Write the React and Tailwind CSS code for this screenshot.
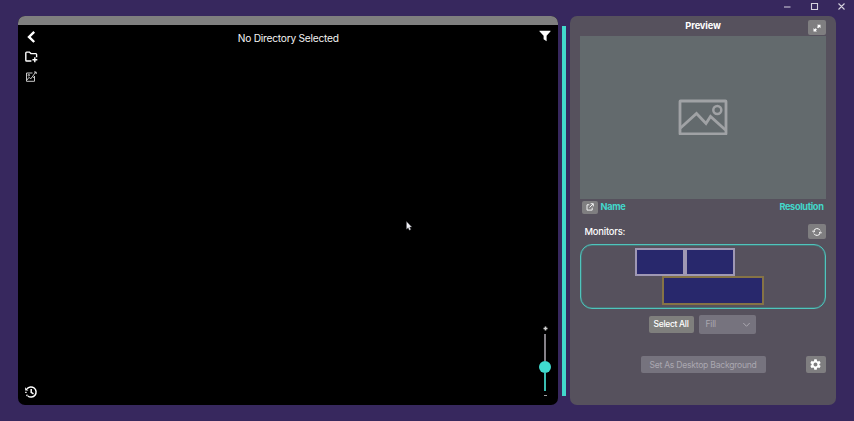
import React from "react";
import { MdSettings } from "react-icons/md";

function IconButton({ className, children, label }) {
  return (
    <button aria-label={label} className={`flex shrink-0 items-center justify-center rounded-[2px] bg-[#7f7e80] text-white ${className}`}>
      {children}
    </button>
  );
}

function TitleBar() {
  return (
    <div className="flex h-4 justify-end text-[#d5d1de]">
      <svg width="73" height="16" viewBox="0 0 73 16" fill="none" stroke="currentColor" strokeWidth="1.1">
        <path d="M3 7h6.500M30.500 3.500h6v6h-6zM57.500 3.500l6 6M63.500 3.500l-6 6" />
      </svg>
    </div>
  );
}

function Toolbar() {
  return (
    <div className="flex w-[26px] flex-col items-center pt-[5px]">
      <svg width="14" height="14" viewBox="0 0 14 14" fill="none" stroke="white" strokeWidth="2.400">
        <path d="M10.200 1.800L5 6.900l5.200 5.100" />
      </svg>
      <svg className="mt-[6px]" width="14" height="14" viewBox="0 0 14 14" fill="none" stroke="white" strokeWidth="1.400">
        <path d="M7.400 11H2.600a.8.8 0 0 1-.8-.8V2.900a.8.8 0 0 1 .8-.8h2.800l1.500 1.500h4.900a.8.8 0 0 1 .8.8v2.900M10.800 7.300v4.900M8.400 9.700h4.900" />
      </svg>
      <svg className="mt-[6px]" width="14" height="14" viewBox="0 0 14 14" fill="none" stroke="#c8c8c8" strokeWidth="1">
        <path d="M8.500 3H2.500v8.300h8V6M2.500 10.500l2.600-3.200 1.600 1.600 2-2.600 1.800 2.200M8.500 6.500L11.800 2M10 2h2.200v2" />
        <circle cx="4.800" cy="5.200" r="0.800" />
      </svg>
      <svg className="mt-auto mb-[6px]" width="14" height="14" viewBox="0 0 14 14" fill="none" stroke="white" strokeWidth="1.500">
        <path d="M3 3.800A5.100 5.100 0 1 1 3.800 11" />
        <path d="M1.900 6.700v2M2.500 9.800l1.200 1.300" strokeDasharray="1.300 1" />
        <path d="M1.200 2.200v3.200h3.200z" fill="white" stroke="none" />
        <path d="M7.200 4v3.400l2.300 1.400" />
      </svg>
    </div>
  );
}

function ZoomSlider() {
  return (
    <div className="mt-auto mb-[6px] flex flex-col items-center text-[#d0d0d0]">
      <svg width="5" height="5" viewBox="0 0 5 5" stroke="currentColor" strokeWidth="1.600"><path d="M.5 2.500h4M2.500.5v4" /></svg>
      <div className="mt-[3px] h-[27px] w-[1.500px] bg-[#858188]" />
      <div className="size-3 rounded-full bg-[#40dccf]" />
      <div className="h-[18px] w-[2px] bg-[#3abdb2]" />
      <div className="mt-[4px] mb-[3px] h-[1.500px] w-[3px] bg-[#a0a0a0]" />
    </div>
  );
}

function Browser() {
  return (
    <main className="flex h-[389px] w-[539.5px] flex-col overflow-hidden rounded-[7px] bg-black">
      <div className="h-[9px] shrink-0 bg-[#7f7f7f]" />
      <div className="flex flex-1">
        <Toolbar />
        <h1 className="flex-1 pt-[4.500px] text-center text-[10.200px] leading-[16px] tracking-[-0.24px] text-[#f3f3f3]">No Directory Selected</h1>
        <div className="flex w-[25px] flex-col items-center pt-[5px]">
          <svg width="12" height="12" viewBox="0 0 12 12" fill="white"><path d="M.8.800h10.400c.4 0 .5.500.2.800L7.600 5.700v5.500L4.600 9.300V5.700L.6 1.600C.3 1.300.4.800.8.800z" /></svg>
          <ZoomSlider />
        </div>
      </div>
    </main>
  );
}

function Preview() {
  return (
    <>
      <div className="grid h-5 grid-cols-[18px_1fr_18px]">
        <span />
        <h2 className="pt-[2px] text-center text-[9.300px] leading-4 font-bold tracking-[-0.15px] text-white">Preview</h2>
        <IconButton label="Expand" className="mt-1 h-[15px] w-[18px]">
          <svg width="8" height="8" viewBox="0 0 8 8" fill="white"><path d="M4 .7h3.500v3.500L6.400 3.100 5.100 4.300 3.900 3.100l1.200-1.200zM.5 4v3.500H4L2.900 6.400l1-1-1.200-1.200-1.100 1z" /></svg>
        </IconButton>
      </div>
      <div className="flex h-[162.5px] items-center justify-center bg-[#636a6d]">
        <svg width="50" height="36" viewBox="0 0 50 36" fill="none" stroke="#a0a2a5" strokeWidth="2.800">
          <rect x="2" y="2" width="46" height="33" rx="0.500" />
          <path d="M2.500 29L18.500 14.500l9.500 10 4.500-7L47.500 31" />
          <circle cx="39.300" cy="11" r="4" strokeWidth="2.500" />
        </svg>
      </div>
      <div className="flex h-[15px] items-center pt-[2px] pr-[2.500px] pl-[1.500px] text-[9.200px] leading-[13px] font-bold tracking-[-0.35px] text-[#43d8cb]">
        <IconButton label="Open file" className="h-[13px] w-4">
          <svg width="8" height="8" viewBox="0 0 8 8" fill="none" stroke="white" strokeWidth="0.900"><path d="M3.300 1.800H1v5.300h5.200V4.600M4.600.700h2.700v2.700M7.100.9L3.500 4.500" /></svg>
        </IconButton>
        <span className="ml-[3px] pb-[2px]">Name</span>
        <span className="ml-auto pb-[2px]">Resolution</span>
      </div>
    </>
  );
}

function Monitors() {
  return (
    <>
      <div className="mt-[10.500px] flex h-[15px] items-center justify-between pl-[4.500px]">
        <span className="pt-[1px] text-[9.400px] font-medium tracking-[-0.2px] text-white">Monitors:</span>
        <IconButton label="Refresh" className="h-[15px] w-[18px]">
          <svg width="10" height="10" viewBox="0 0 10 10" fill="none" stroke="white" strokeWidth="1"><path d="M1.700 4.300a3.400 3.400 0 0 1 6.300-1M8.300 5.700a3.400 3.400 0 0 1-6.300 1M.3 3.700l1.300 1.500L3 3.900M9.700 6.300L8.400 4.800 7 6.100" /></svg>
        </IconButton>
      </div>
      <div className="mt-[5px] h-[65px] rounded-[12px] border border-[#50c4bd] pt-[2.500px] shadow-[inset_0_0_0_0.7px_#43817f]">
        <div className="ml-[53.500px] flex">
          <div className="h-[28.500px] w-[50px] border-2 border-[#9f98b4] bg-[#28286c]" />
          <div className="h-[28.500px] w-[50px] border-2 border-[#9f98b4] bg-[#28286c]" />
        </div>
        <div className="ml-[80.500px] h-[29px] w-[102px] border-2 border-[#857346] bg-[#28286c]" />
      </div>
      <div className="mt-[5.500px] flex h-[19px] gap-[5px] pl-[68.500px]">
        <button className="mt-[1.500px] h-[17px] w-[45px] rounded-[2px] bg-[#7f7f7d] text-[8.500px] leading-[17px] font-medium tracking-[-0.3px] whitespace-nowrap text-white">Select All</button>
        <button className="flex h-[19px] w-[57px] items-center justify-between rounded-[2px] bg-[#76737e] pr-[5px] pl-[7px] text-[8.500px] leading-[12px] tracking-[-0.2px] text-[#aaa7b0]">
          <span className="pb-[1px]">Fill</span>
          <svg className="mt-[1px]" width="9" height="6" viewBox="0 0 9 6" fill="none" stroke="#aaa7b0"><path d="M1.300 1l3.200 3.300L7.700 1" /></svg>
        </button>
      </div>
    </>
  );
}

export default function App() {
  return (
    <div className="h-[421px] w-[854px] overflow-hidden bg-[#37285e] font-['Inter',sans-serif]">
      <TitleBar />
      <div className="flex pl-[18px]">
        <Browser />
        <div className="mt-[9.500px] ml-[4.500px] h-[370.5px] w-1 bg-[#42d8cd]" />
        <aside className="ml-1 h-[389px] w-[266px] rounded-[7px] bg-[#56515d] px-[10px]">
          <Preview />
          <Monitors />
          <div className="mt-[22.500px] flex items-center pl-[60.500px]">
            <button className="h-[17px] w-[125px] rounded-[2px] bg-[#76737e] pt-[1px] text-[8.600px] leading-[16px] tracking-[-0.25px] whitespace-nowrap text-[#aaa7b0]">Set As Desktop Background</button>
            <IconButton label="Settings" className="mr-[0.500px] ml-auto h-[17px] w-5">
              <MdSettings size={13} />
            </IconButton>
          </div>
        </aside>
      </div>
      <svg className="absolute top-[221px] left-[406px]" width="7" height="11" viewBox="0 0 7 11" fill="#f0f0f5" stroke="#55555c" strokeWidth="0.400"><path d="M.5.500v7.700l1.700-1.500 1.100 2.600 1.500-.7-1.100-2.500h2.100z" /></svg>
    </div>
  );
}
